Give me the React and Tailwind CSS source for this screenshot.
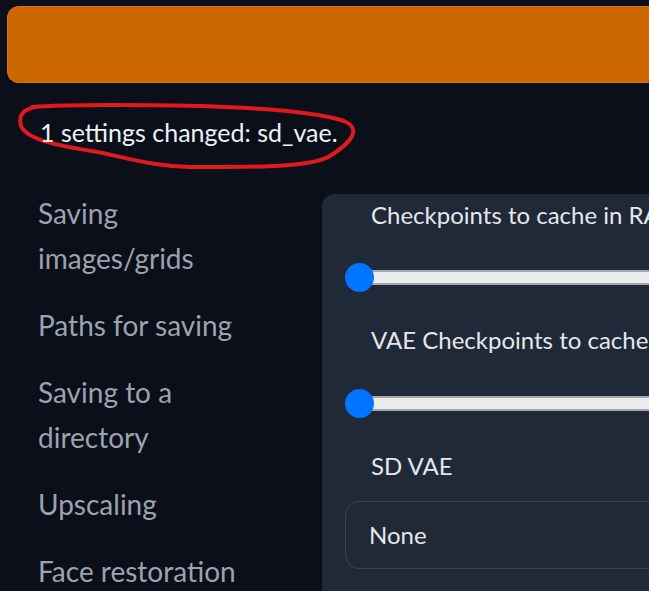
import React from "react";

const SECTIONS = [
  "Saving images/grids",
  "Paths for saving",
  "Saving to a directory",
  "Upscaling",
  "Face restoration",
];

const Slider = ({ className = "" }) => (
  <div className={`relative h-[30px] flex items-center ${className}`}>
    <div className="absolute left-[14px] right-0 h-[15px] bg-[#ececec] border-y-2 border-[#a4a7ad]"></div>
    <div className="relative w-[29px] h-[29px] rounded-full bg-[#0075ff]"></div>
  </div>
);

const App = () => {
  return (
    <div
      className="min-h-screen w-full overflow-hidden bg-[#0b0f19] text-[#e5e7eb]"
      style={{ fontFamily: "Lato, 'Open Sans', sans-serif" }}
    >
      {/* Orange banner */}
      <div className="pt-[6px] pl-[7px]">
        <div className="h-[77px] w-[900px] rounded-l-xl bg-[#cc6600] border border-r-0 border-[#e07312]"></div>
      </div>

      {/* Status message with hand drawn circle */}
      <div className="relative h-[111px]">
        <svg
          className="absolute left-0 top-[-83px] pointer-events-none"
          width="370"
          height="200"
          viewBox="0 0 370 200"
          fill="none"
        >
          <path
            d="M 32 107 C 70 104 150 105 200 106 C 262 108 318 112 344 121 C 362 129 352 142 330 156 C 310 168 250 167 190 167 C 150 166 125 157 92 151 C 60 146 27 140 21 126 C 18 114 24 109 36 107"
            stroke="#e0191c"
            strokeWidth="4"
            strokeLinecap="round"
          />
        </svg>
        <p className="relative pt-[31px] pl-[40px] text-[25px] leading-[36px] text-[#eef2f7]">
          1 settings changed: sd_vae.
        </p>
      </div>

      <div className="flex">
        {/* Sidebar */}
        <div className="w-[322px] shrink-0 pl-[38px] pr-[60px] mt-[-3px] flex flex-col gap-[22px]">
          {SECTIONS.map((s) => (
            <div key={s} className="text-[28px] leading-[45px] text-[#9ca3af]">
              {s}
            </div>
          ))}
        </div>

        {/* Settings panel, wider than the window */}
        <div className="w-[620px] shrink-0 rounded-tl-xl bg-[#1f2937] px-[23px] pt-[3px] pb-8">
          <div className="pl-[26px] text-[24px] leading-[36px] whitespace-nowrap">
            Checkpoints to cache in RAM
          </div>
          <Slider className="mt-[29px]" />
          <div className="mt-[30px] pl-[26px] text-[24px] leading-[36px] whitespace-nowrap">
            VAE Checkpoints to cache in RAM
          </div>
          <Slider className="mt-[30px]" />
          <div className="mt-[30px] pl-[26px] text-[24px] leading-[36px] whitespace-nowrap">
            SD VAE
          </div>
          <div className="mt-[17px] h-[68px] rounded-[14px] border border-[#374151] flex items-center pl-[23px] text-[24px]">
            None
          </div>
        </div>
      </div>
    </div>
  );
};

export default App;
